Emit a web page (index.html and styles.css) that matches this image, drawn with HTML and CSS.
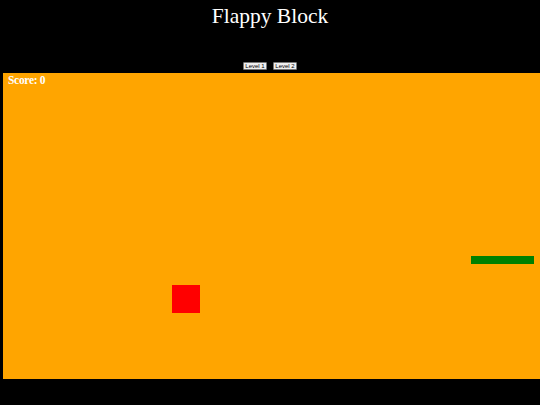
FILE: index.html
```html
<!DOCTYPE html>
<html>
<head>
<meta charset="utf-8">
<link rel="stylesheet" href="styles.css">
</head>
<body>
<h1 class="title">Flappy Block</h1>
<div class="controls">
  <button class="level-btn">Level 1</button>
  <button class="level-btn">Level 2</button>
</div>
<div class="game">
  <div class="score">Score: 0</div>
  <div class="bird"></div>
  <div class="pipe"></div>
</div>
</body>
</html>
```
FILE: styles.css
```css
html, body {
  margin: 0;
  padding: 0;
  background: #000;
  overflow: hidden;
}
.title {
  margin: 0;
  padding-top: 3px;
  font-family: "Liberation Serif", serif;
  font-weight: normal;
  font-size: 21.5px;
  line-height: 26px;
  color: #fff;
  text-align: center;
}
.controls {
  display: flex;
  justify-content: center;
  gap: 6px;
  margin-top: 33px;
  height: 8px;
}
.level-btn {
  box-sizing: border-box;
  width: 24px;
  height: 8px;
  padding: 0;
  margin: 0;
  font-family: "Liberation Sans", sans-serif;
  font-size: 6px;
  line-height: 6px;
  color: #000;
  background: #efefef;
  border: 1px solid #767676;
  border-radius: 1px;
}
.game {
  position: relative;
  margin-top: 3px;
  margin-left: 3px;
  width: 545px;
  height: 306px;
  background: #ffa500;
}
.score {
  position: absolute;
  left: 5px;
  top: 1px;
  font-family: "Liberation Serif", serif;
  font-weight: bold;
  font-size: 11.5px;
  letter-spacing: -0.3px;
  color: #fff;
}
.bird {
  position: absolute;
  left: 169px;
  top: 212px;
  width: 28px;
  height: 28px;
  background: #f00;
}
.pipe {
  position: absolute;
  left: 468px;
  top: 183px;
  width: 63px;
  height: 8px;
  background: #008000;
}
```
